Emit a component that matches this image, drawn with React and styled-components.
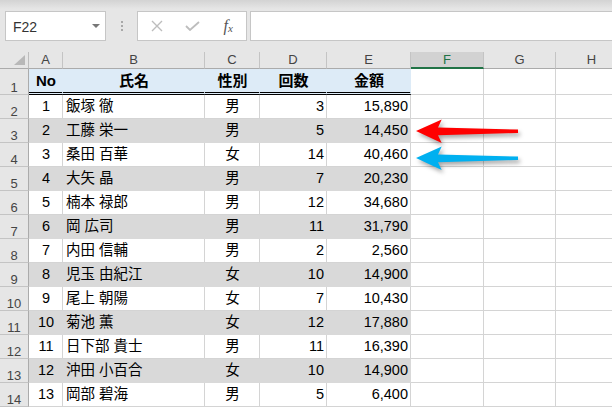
import styled, { createGlobalStyle } from "styled-components";

const GlobalStyle = createGlobalStyle`
  html, body {
    margin: 0;
    padding: 0;
    background: #fff;
  }
  body {
    font-family: "Liberation Sans", "Noto Sans CJK JP", sans-serif;
  }
`;

const COLS = "29px 34px 142px 55px 67px 84px 73px 72px 72px";

const rows = [
  [1, "飯塚 徹", "男", 3, "15,890"],
  [2, "工藤 栄一", "男", 5, "14,450"],
  [3, "桑田 百華", "女", 14, "40,460"],
  [4, "大矢 晶", "男", 7, "20,230"],
  [5, "楠本 禄郎", "男", 12, "34,680"],
  [6, "岡 広司", "男", 11, "31,790"],
  [7, "内田 信輔", "男", 2, "2,560"],
  [8, "児玉 由紀江", "女", 10, "14,900"],
  [9, "尾上 朝陽", "女", 7, "10,430"],
  [10, "菊池 薫", "女", 12, "17,880"],
  [11, "日下部 貴士", "男", 11, "16,390"],
  [12, "沖田 小百合", "女", 10, "14,900"],
  [13, "岡部 碧海", "男", 5, "6,400"],
];

export default function App() {
  return (
    <Page>
      <GlobalStyle />
      <Toolbar>
        <NameBox>
          <span>F22</span>
          <DropCaret />
        </NameBox>
        <Grip>
          <i />
          <i />
          <i />
        </Grip>
        <FxBox>
          <IconSlot>
            <svg width="12" height="12" viewBox="0 0 12 12">
              <path d="M1 1 L11 11 M11 1 L1 11" stroke="#bdbdbd" strokeWidth="1.4" fill="none" />
            </svg>
          </IconSlot>
          <IconSlot>
            <svg width="15" height="10" viewBox="0 0 15 10">
              <path d="M1 5 L5 9 L14 1" stroke="#bdbdbd" strokeWidth="1.8" fill="none" />
            </svg>
          </IconSlot>
          <IconSlot>
            <Fx>
              f<sub>x</sub>
            </Fx>
          </IconSlot>
        </FxBox>
        <FormulaInput />
      </Toolbar>

      <HeaderRow>
        <Corner>
          <svg width="11" height="10" viewBox="0 0 11 10">
            <path d="M0 10 L11 0 L11 10 Z" fill="#b8b8b8" />
          </svg>
        </Corner>
        {["A", "B", "C", "D", "E", "F", "G", "H"].map((c) => (
          <ColHead key={c} $selected={c === "F"}>
            {c}
          </ColHead>
        ))}
      </HeaderRow>

      <Row $h={26}>
        <RowHead>1</RowHead>
        <Cell $fill="#ddebf7" $double $align="center" $bold>No</Cell>
        <Cell $fill="#ddebf7" $double $align="center" $bold>氏名</Cell>
        <Cell $fill="#ddebf7" $double $align="center" $bold>性別</Cell>
        <Cell $fill="#ddebf7" $double $align="center" $bold>回数</Cell>
        <Cell $fill="#ddebf7" $double $align="center" $bold>金額</Cell>
        <Cell />
        <Cell />
        <Cell />
      </Row>

      {rows.map((r, i) => {
        const fill = i % 2 === 1 ? "#d9d9d9" : undefined;
        return (
          <Row key={r[0]} $h={24}>
            <RowHead>{i + 2}</RowHead>
            <Cell $fill={fill} $align="center">{r[0]}</Cell>
            <Cell $fill={fill}>{r[1]}</Cell>
            <Cell $fill={fill} $align="center">{r[2]}</Cell>
            <Cell $fill={fill} $align="right">{r[3]}</Cell>
            <Cell $fill={fill} $align="right">{r[4]}</Cell>
            <Cell />
            <Cell />
            <Cell />
          </Row>
        );
      })}

      <Arrow $top={115} color="#ff0000" />
      <Arrow $top={142} color="#00b0f0" />
    </Page>
  );
}

function Arrow({ $top, color }) {
  return (
    <ArrowSvg $top={$top} width="118" height="36" viewBox="0 0 118 36">
      <path
        d="M6 16 L31.7 4.6 L28 12.6 L108 14.6 L108 18 L28 20.3 L31.7 28 Z"
        fill={color}
      />
    </ArrowSvg>
  );
}

const Page = styled.div`
  position: relative;
  width: 612px;
  height: 408px;
  overflow: hidden;
  background: #fff;
`;

const Toolbar = styled.div`
  height: 52px;
  box-sizing: border-box;
  padding: 11px 0 0 5px;
  display: flex;
  align-items: flex-start;
  background: linear-gradient(#d3d3d3 0px, #e6e6e6 9px, #e6e6e6 100%);
`;

const NameBox = styled.div`
  box-sizing: border-box;
  width: 101px;
  height: 30px;
  border: 1px solid #c6c6c6;
  background: #fff;
  display: flex;
  align-items: center;
  justify-content: space-between;
  padding: 1px 5px 0 7px;
  font-size: 14px;
  color: #333;
`;

const DropCaret = styled.span`
  width: 0;
  height: 0;
  border-left: 4px solid transparent;
  border-right: 4px solid transparent;
  border-top: 4px solid #777;
  margin-top: -2px;
`;

const Grip = styled.div`
  width: 31px;
  height: 30px;
  display: flex;
  flex-direction: column;
  align-items: center;
  justify-content: center;
  gap: 2px;
  i {
    width: 2px;
    height: 2px;
    background: #a8a8a8;
  }
`;

const FxBox = styled.div`
  box-sizing: border-box;
  width: 110px;
  height: 30px;
  border: 1px solid #c6c6c6;
  background: #fff;
  display: flex;
  align-items: center;
  padding-left: 1px;
`;

const IconSlot = styled.div`
  width: 36px;
  height: 100%;
  display: flex;
  align-items: center;
  justify-content: center;
`;

const Fx = styled.span`
  font-family: "Liberation Serif", serif;
  font-style: italic;
  font-size: 16px;
  color: #555;
  sub {
    font-size: 11px;
    vertical-align: -1px;
  }
`;

const FormulaInput = styled.div`
  flex: 1;
  height: 30px;
  box-sizing: border-box;
  margin-left: 3px;
  border: 1px solid #c6c6c6;
  border-right: none;
  background: #fff;
`;

const HeaderRow = styled.div`
  display: grid;
  grid-template-columns: ${COLS};
  height: 17px;
  background: #e6e6e6;
`;

const Corner = styled.div`
  box-sizing: border-box;
  border-right: 1px solid #bdbdbd;
  border-bottom: 1px solid #ababab;
  display: flex;
  align-items: flex-end;
  justify-content: flex-end;
  padding: 0 3px 3px 0;
`;

const ColHead = styled.div`
  box-sizing: border-box;
  border-right: 1px solid #c4c4c4;
  border-bottom: ${(p) => (p.$selected ? "2px solid #217346" : "1px solid #ababab")};
  background: ${(p) => (p.$selected ? "#d2d2d2" : "#e6e6e6")};
  color: ${(p) => (p.$selected ? "#217346" : "#444")};
  font-size: 13px;
  line-height: 15px;
  display: flex;
  align-items: flex-end;
  justify-content: center;
  padding-bottom: ${(p) => (p.$selected ? "0" : "1px")};
`;

const Row = styled.div`
  display: grid;
  grid-template-columns: ${COLS};
  height: ${(p) => p.$h}px;
`;

const RowHead = styled.div`
  box-sizing: border-box;
  background: #e6e6e6;
  border-right: 1px solid #ababab;
  border-bottom: 1px solid #c4c4c4;
  color: #444;
  font-size: 13px;
  line-height: 13px;
  display: flex;
  align-items: flex-end;
  justify-content: center;
`;

const Cell = styled.div`
  box-sizing: border-box;
  min-width: 0;
  overflow: hidden;
  white-space: nowrap;
  background: ${(p) => p.$fill || "#fff"};
  border-right: 1px solid ${(p) => p.$fill || "#d4d4d4"};
  border-bottom: ${(p) => (p.$double ? "3px double #000" : `1px solid ${p.$fill || "#d4d4d4"}`)};
  display: flex;
  align-items: flex-end;
  justify-content: ${(p) =>
    p.$align === "right" ? "flex-end" : p.$align === "center" ? "center" : "flex-start"};
  padding: 0 2px 3px 3px;
  font-size: ${(p) => (p.$bold ? "15px" : "14.5px")};
  font-weight: ${(p) => (p.$bold ? 700 : 400)};
  line-height: 17px;
  color: #000;
`;

const ArrowSvg = styled.svg`
  position: absolute;
  left: 410px;
  top: ${(p) => p.$top}px;
  overflow: visible;
  filter: drop-shadow(2px 3px 2px rgba(0, 0, 0, 0.35));
`;
